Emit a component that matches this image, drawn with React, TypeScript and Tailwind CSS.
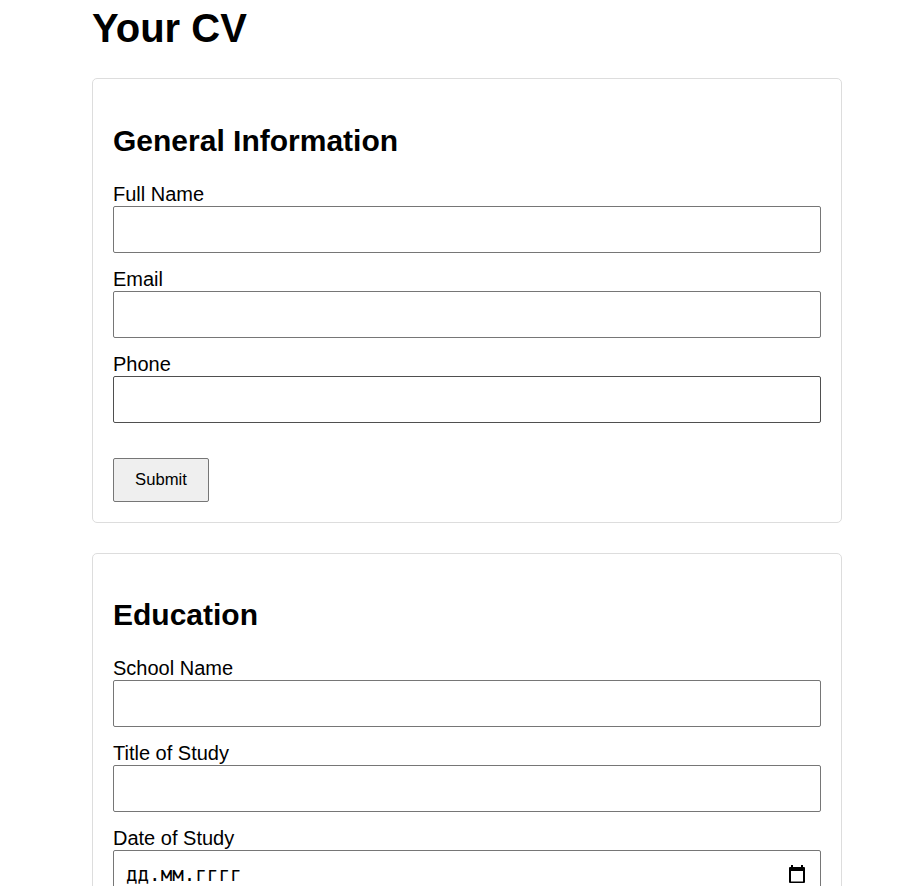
import React from "react";

function Field({ label, active = false }: { label: string; active?: boolean }) {
  return (
    <label className="mb-[15px] block h-[70px] text-[20px] leading-[23px]">
      <span className="block h-[23px]">{label}</span>
      <input className={`block h-[47px] w-full rounded-[2px] border bg-white px-3 outline-none ${active ? "border-[#4f4f4f]" : "border-[#767676]"}`} />
    </label>
  );
}

function Section({ title, className, children }: { title: string; className: string; children: React.ReactNode }) {
  return (
    <section className={`rounded-[5px] border border-[#dddddd] px-5 ${className}`}>
      <h2 className="mb-[25px] text-[30px] font-bold leading-[34px]">{title}</h2>
      {children}
    </section>
  );
}

export default function App() {
  return (
    <main className="h-[886px] overflow-hidden bg-white pl-[92px] pr-[61px] font-['Liberation_Sans',Arial,sans-serif] text-black">
      <h1 className="h-[78px] pt-[5px] text-[40px] font-bold leading-[46px]">Your CV</h1>
      <Section title="General Information" className="h-[445px] pt-[45px]">
        <Field label="Full Name" />
        <Field label="Email" />
        <Field label="Phone" active />
        <button className="mt-[20px] h-[44px] w-[96px] rounded-[2px] border border-[#767676] bg-[#efefef] pb-px text-[16.67px] leading-5">Submit</button>
      </Section>
      <Section title="Education" className="mt-[30px] h-[445px] pt-[44px]">
        <Field label="School Name" />
        <Field label="Title of Study" />
        <div className="text-[20px] leading-[23px]">
          <div>Date of Study</div>
          <div className="flex h-[47px] items-center justify-between rounded-[2px] border border-[#767676] pl-3 pr-[15px] pt-[2px]">
            <span className="font-['DejaVu_Sans_Mono','Liberation_Mono',monospace] text-[19.2px]">дд.мм.гггг</span>
            <svg width="16" height="18" viewBox="0 0 16 18" className="mb-px">
              <path fill="black" fillRule="evenodd" d="M2 0h2v2h8V0h2v2h1a1 1 0 0 1 1 1v14a1 1 0 0 1-1 1H1a1 1 0 0 1-1-1V3a1 1 0 0 1 1-1h1zM2 6v10.5h12V6z" />
            </svg>
          </div>
        </div>
      </Section>
    </main>
  );
}
